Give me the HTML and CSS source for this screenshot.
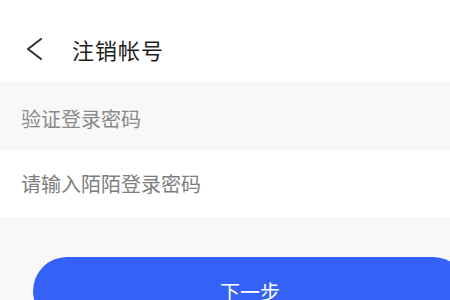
FILE: index.html
```html
<!DOCTYPE html>
<html lang="zh-CN">
<head>
<meta charset="utf-8">
<link rel="stylesheet" href="styles.css">
</head>
<body>
<div class="page">
  <header class="topbar">
    <svg class="back" width="18" height="24" viewBox="0 0 18 24">
      <path d="M15 2 L2 12 L15 22" fill="none" stroke="#333" stroke-width="2.1" stroke-linecap="round" stroke-linejoin="round"/>
    </svg>
    <h1 class="title">注销帐号</h1>
  </header>
  <div class="section-label">验证登录密码</div>
  <div class="input-row">
    <input class="pwd" type="password" placeholder="请输入陌陌登录密码">
  </div>
  <div class="actions">
    <button class="next">下一步</button>
  </div>
</div>
</body>
</html>
```

FILE: styles.css
```css
html, body {
  margin: 0;
  padding: 0;
  overflow: hidden;
  background: #f8f8f8;
}
body {
  font-family: "Noto Sans CJK SC", "Noto Sans", sans-serif;
  width: 450px;
  height: 300px;
}
.page {
  width: 450px;
}
.topbar {
  height: 82px;
  background: #ffffff;
  display: flex;
  align-items: center;
  padding-left: 26px;
  padding-top: 16px;
  box-sizing: border-box;
}
.back {
  display: block;
}
.title {
  margin: 0 0 0 28px;
  font-size: 22px;
  font-weight: 400;
  color: #1e1e1e;
  line-height: 1;
  letter-spacing: 1px;
}
.section-label {
  height: 68px;
  display: flex;
  align-items: center;
  padding-left: 21px;
  padding-top: 4px;
  font-size: 20px;
  color: #8a8a8a;
  background: #f8f8f8;
  box-sizing: border-box;
}
.input-row {
  height: 67px;
  background: #ffffff;
  display: flex;
  align-items: center;
  padding-left: 21px;
  box-sizing: border-box;
}
.pwd {
  border: none;
  outline: none;
  background: transparent;
  font-family: "Noto Sans CJK SC", "Noto Sans", sans-serif;
  font-size: 20px;
  color: #333;
  padding: 0;
  width: 400px;
}
.pwd::placeholder {
  color: #7e7e7e;
}
.actions {
  padding-top: 40px;
  padding-left: 33px;
}
.next {
  width: 434px;
  height: 68px;
  border: none;
  border-radius: 34px;
  background: #3462f6;
  color: #ffffff;
  font-family: "Noto Sans CJK SC", "Noto Sans", sans-serif;
  font-size: 20px;
  padding: 0;
  display: block;
}
```
